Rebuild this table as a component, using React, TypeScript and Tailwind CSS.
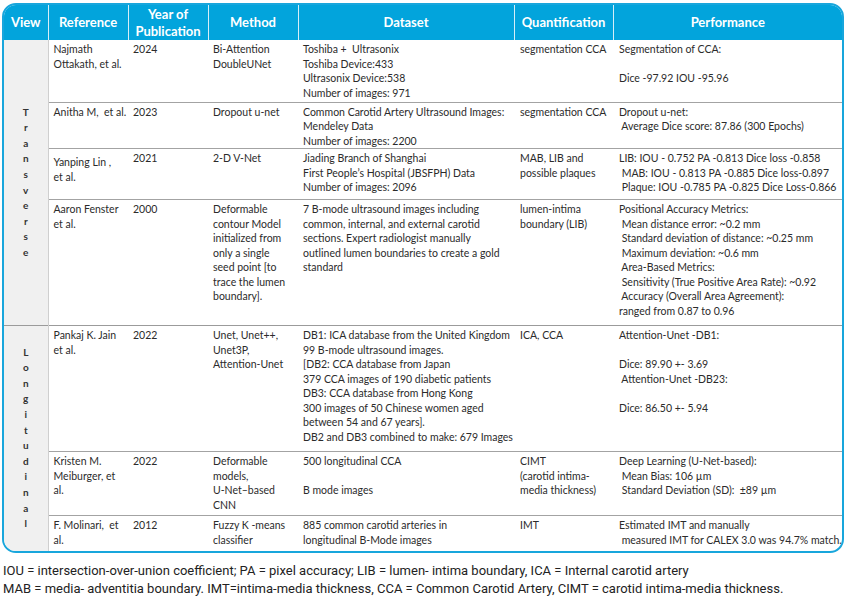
import React from "react";

type Row = {
  ref: string[];
  year: string;
  method: string[];
  dataset: string[];
  quant: string[];
  perf: string[];
  h: string;
  refPad?: string;
};

const TRANSVERSE: Row[] = [
  {
    h: "h-[62px]",
    ref: ["Najmath", "Ottakath, et al."],
    year: "2024",
    method: ["Bi-Attention", "DoubleUNet"],
    dataset: ["Toshiba +  Ultrasonix", "Toshiba Device:433", "Ultrasonix Device:538", "Number of images: 971"],
    quant: ["segmentation CCA"],
    perf: ["Segmentation of CCA:", "", "Dice -97.92 IOU -95.96"],
  },
  {
    h: "h-[45px]",
    ref: ["Anitha M,  et al."],
    year: "2023",
    method: ["Dropout u-net"],
    dataset: ["Common Carotid Artery Ultrasound Images:", "Mendeley Data", "Number of images: 2200"],
    quant: ["segmentation CCA"],
    perf: ["Dropout u-net:", " Average Dice score: 87.86 (300 Epochs)"],
  },
  {
    h: "h-[51px]",
    refPad: "!pt-[6px]",
    ref: ["Yanping Lin ,", "et al."],
    year: "2021",
    method: ["2-D V-Net"],
    dataset: ["Jiading Branch of Shanghai", "First People’s Hospital (JBSFPH) Data", "Number of images: 2096"],
    quant: ["MAB, LIB and", "possible plaques"],
    perf: [
      "LIB: IOU - 0.752 PA -0.813 Dice loss -0.858",
      " MAB: IOU - 0.813 PA -0.885 Dice loss-0.897",
      " Plaque: IOU -0.785 PA -0.825 Dice Loss-0.866",
    ],
  },
  {
    h: "h-[126px]",
    ref: ["Aaron Fenster", "et al."],
    year: "2000",
    method: ["Deformable", "contour Model", "initialized from", "only a single", "seed point [to", "trace the lumen", "boundary]."],
    dataset: [
      "7 B-mode ultrasound images including",
      "common, internal, and external carotid",
      "sections. Expert radiologist manually",
      "outlined lumen boundaries to create a gold",
      "standard",
    ],
    quant: ["lumen-intima", "boundary (LIB)"],
    perf: [
      "Positional Accuracy Metrics:",
      " Mean distance error: ~0.2 mm",
      " Standard deviation of distance: ~0.25 mm",
      " Maximum deviation: ~0.6 mm",
      " Area-Based Metrics:",
      " Sensitivity (True Positive Area Rate): ~0.92",
      " Accuracy (Overall Area Agreement):",
      "ranged from 0.87 to 0.96",
    ],
  },
];

const LONGITUDINAL: Row[] = [
  {
    h: "h-[126px]",
    ref: ["Pankaj K. Jain", "et al."],
    year: "2022",
    method: ["Unet, Unet++,", "Unet3P,", "Attention-Unet"],
    dataset: [
      "DB1: ICA database from the United Kingdom",
      "99 B-mode ultrasound images.",
      "[DB2: CCA database from Japan",
      "379 CCA images of 190 diabetic patients",
      "DB3: CCA database from Hong Kong",
      "300 images of 50 Chinese women aged",
      "between 54 and 67 years].",
      "DB2 and DB3 combined to make: 679 Images",
    ],
    quant: ["ICA, CCA"],
    perf: ["Attention-Unet -DB1:", "", "Dice: 89.90 +- 3.69", " Attention-Unet -DB23:", "", "Dice: 86.50 +- 5.94"],
  },
  {
    h: "h-[64px]",
    ref: ["Kristen M.", "Meiburger, et", "al."],
    year: "2022",
    method: ["Deformable", "models,", "U-Net–based", "CNN"],
    dataset: ["500 longitudinal CCA", "", "B mode images"],
    quant: ["CIMT", "(carotid intima-", "media thickness)"],
    perf: ["Deep Learning (U-Net-based):", " Mean Bias: 106 µm", " Standard Deviation (SD):  ±89 µm"],
  },
  {
    h: "h-[35px]",
    ref: ["F. Molinari,  et", "al."],
    year: "2012",
    method: ["Fuzzy K -means", "classifier"],
    dataset: ["885 common carotid arteries in", "longitudinal B-Mode images"],
    quant: ["IMT"],
    perf: ["Estimated IMT and manually", " measured IMT for CALEX 3.0 was 94.7% match."],
  },
];

function Lines({ lines }: { lines: string[] }) {
  return (
    <>
      {lines.map((l, i) => (
        <div key={i} className="whitespace-pre">
          {l === "" ? "\u00a0" : l}
        </div>
      ))}
    </>
  );
}

function Stacked({ word }: { word: string }) {
  return (
    <div className="flex flex-col items-center text-[10px] font-bold leading-[15.6px] text-[#333]">
      {word.split("").map((c, i) => (
        <span key={i}>{c}</span>
      ))}
    </div>
  );
}

const td = "align-top pt-[2px] pl-[5px] pr-[2px]";

function Group({ label, rows, first }: { label: string; rows: Row[]; first?: boolean }) {
  return (
    <>
      {rows.map((r, i) => (
        <tr key={i} className={`${r.h} ${i === 0 && !first ? "border-t-[1.5px] border-[#9b9b9b]" : i > 0 ? "border-t border-[#a3a3a3]" : ""}`}>
          {i === 0 && (
            <td rowSpan={rows.length} className="bg-[#f0f0f0] border-r border-[#cfcfcf] align-middle">
              <Stacked word={label} />
            </td>
          )}
          <td className={`${td} ${r.refPad ?? ""}`}>
            <Lines lines={r.ref} />
          </td>
          <td className={td}>{r.year}</td>
          <td className={td}>
            <Lines lines={r.method} />
          </td>
          <td className={td}>
            <Lines lines={r.dataset} />
          </td>
          <td className={`${td} pl-[6px]`}>
            <Lines lines={r.quant} />
          </td>
          <td className={`${td} pl-[6px]`}>
            <Lines lines={r.perf} />
          </td>
        </tr>
      ))}
    </>
  );
}

export default function App() {
  return (
    <div className="w-[846px] h-[597px] bg-white px-[2px] pt-[3px] font-['Lato',sans-serif] text-[#2b2b2b]">
      <div className="w-[842px] overflow-hidden rounded-[14px] border-2 border-[#18a6dc]">
        <table className="w-full table-fixed border-collapse text-[10.5px] leading-[14.5px]">
          <colgroup>
            <col className="w-[44px]" />
            <col className="w-[80px]" />
            <col className="w-[80px]" />
            <col className="w-[90px]" />
            <col className="w-[216px]" />
            <col className="w-[99px]" />
            <col />
          </colgroup>
          <thead>
            <tr className="h-[35px] bg-[#02a4dc] text-[13px] font-bold leading-[17px] text-white">
              <th className="border-r border-[#d6eef8]">View</th>
              <th className="border-r border-[#d6eef8]">Reference</th>
              <th className="border-r border-[#d6eef8]">
                Year of
                <br />
                Publication
              </th>
              <th className="border-r border-[#d6eef8]">Method</th>
              <th className="border-r border-[#d6eef8]">Dataset</th>
              <th className="border-r border-[#d6eef8]">Quantification</th>
              <th>Performance</th>
            </tr>
          </thead>
          <tbody>
            <Group label="Transverse" rows={TRANSVERSE} first />
            <Group label="Longitudinal" rows={LONGITUDINAL} />
          </tbody>
        </table>
      </div>
      <div className="mt-[9px] pl-[1px] font-['Roboto',sans-serif] text-[13px] leading-[18px] text-[#222]">
        <div>IOU = intersection-over-union coefficient; PA = pixel accuracy; LIB = lumen- intima boundary, ICA = Internal carotid artery</div>
        <div>MAB = media- adventitia boundary. IMT=intima-media thickness, CCA = Common Carotid Artery, CIMT = carotid intima-media thickness.</div>
      </div>
    </div>
  );
}
